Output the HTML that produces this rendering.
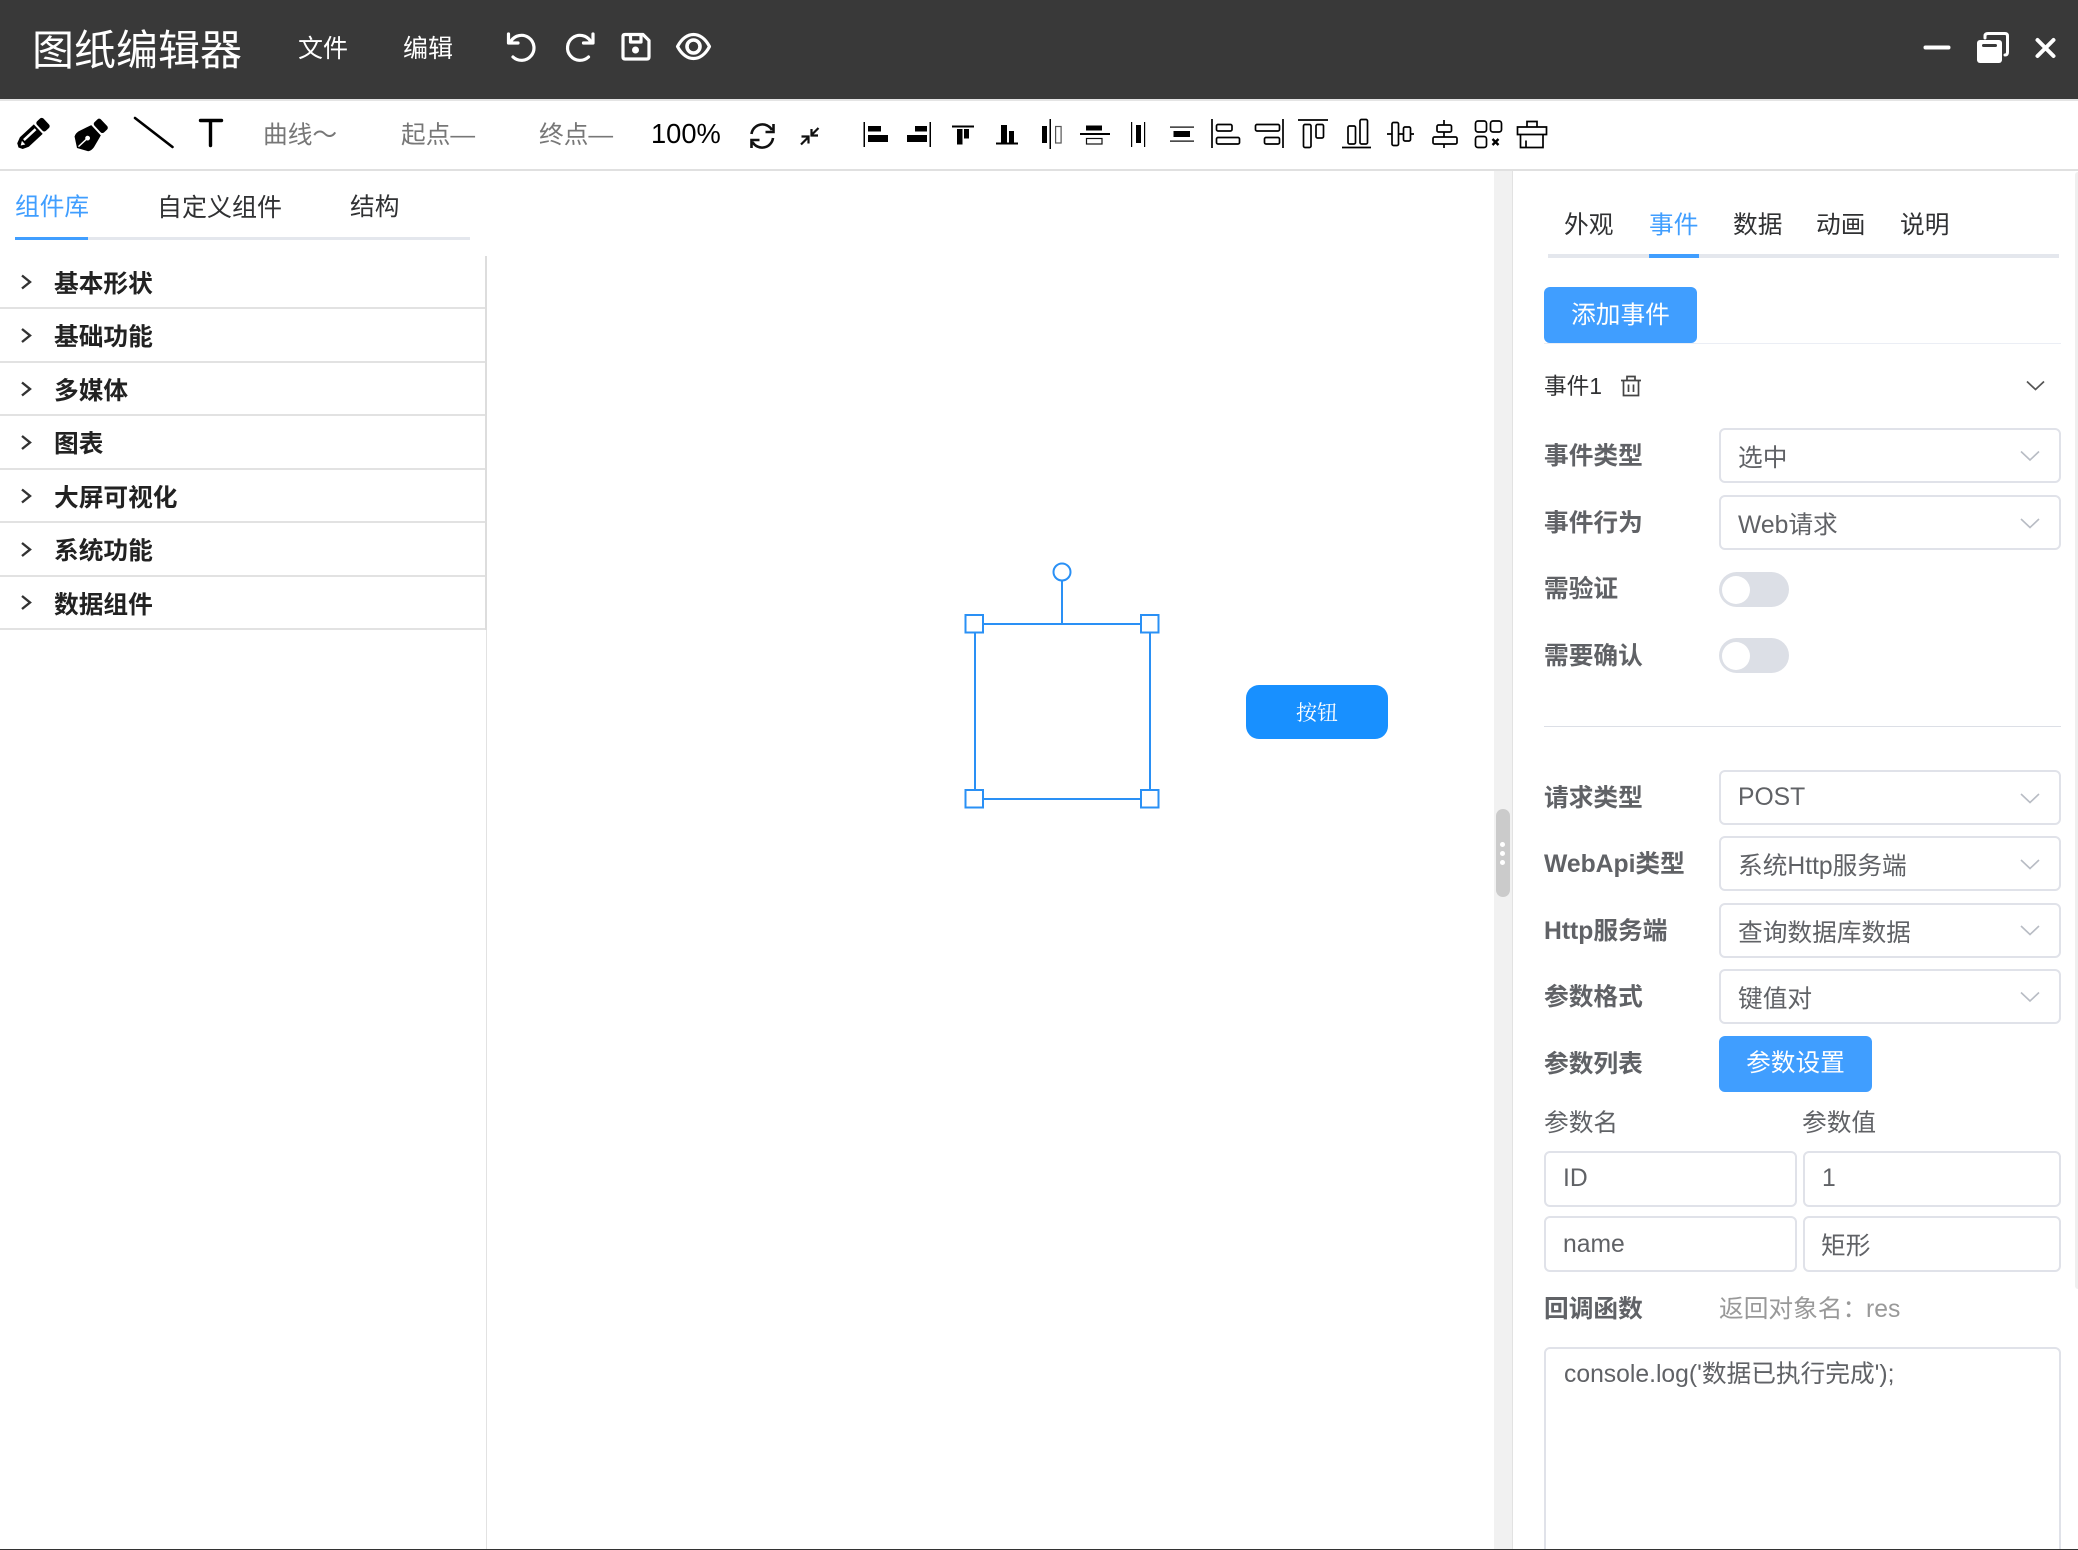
<!DOCTYPE html>
<html lang="zh-CN">
<head>
<meta charset="utf-8">
<title>图纸编辑器</title>
<style>
html,body{margin:0;padding:0;background:#fff;}
#p{position:relative;width:2078px;height:1550px;overflow:hidden;background:#fff;font-family:"Liberation Sans","Noto Sans CJK SC",sans-serif;font-size:24.7px;color:#606266;}
#p div{position:absolute;box-sizing:border-box;}
.t{white-space:nowrap;line-height:30px;height:30px;}
.b{font-weight:700;}
.acc{left:54px;font-weight:700;color:#222;}
.line{left:0;width:485px;height:2px;background:#e2e2e2;}
.sel,.inp{border:2px solid #e0e2e9;border-radius:6px;background:#fff;}
.sw{left:1719px;width:70px;height:35px;border-radius:18px;background:#dcdfe6;}
.sw i{position:absolute;left:3px;top:3.5px;width:28px;height:28px;border-radius:50%;background:#fff;}
.btn{background:#409eff;border-radius:6px;color:#fff;text-align:center;}
svg{position:absolute;left:0;top:0;}
</style>
</head>
<body>
<div id="p">
<div style="left:0;top:0;width:2078px;height:99px;background:#393939;"></div>
<div style="left:0;top:99px;width:2078px;height:2px;background:#e4e4e4;"></div>
<div style="left:0;top:169px;width:2078px;height:2px;background:#e0e0e0;"></div>

<div class="t" style="left:32px;top:26px;font-size:42px;line-height:50px;height:50px;color:#fff;">图纸编辑器</div>
<div class="t" style="left:298px;top:34px;color:#fff;font-size:25px;">文件</div>
<div class="t" style="left:403px;top:34px;color:#fff;font-size:25px;">编辑</div>

<div class="t" style="left:263px;top:121px;color:#777;">曲线～</div>
<div class="t" style="left:401px;top:121px;color:#777;">起点—</div>
<div class="t" style="left:539px;top:121px;color:#777;">终点—</div>
<div class="t" style="left:651px;top:119px;color:#000;font-size:27.3px;">100%</div>

<!-- left tabs -->
<div class="t" style="left:15px;top:193px;color:#409eff;">组件库</div>
<div class="t" style="left:157px;top:193px;color:#303133;font-size:25px;">自定义组件</div>
<div class="t" style="left:350px;top:193px;color:#303133;">结构</div>
<div style="left:15px;top:237px;width:455px;height:3px;background:#e4e7ed;"></div>
<div style="left:15px;top:237px;width:73px;height:3px;background:#409eff;"></div>

<div style="left:485px;top:256px;width:2px;height:374px;background:#ddd;"></div>
<div style="left:486px;top:630px;width:1px;height:920px;background:#e2e2e2;"></div>
<div class="t acc" style="top:270px;">基本形状</div><div class="line" style="top:307px;"></div>
<div class="t acc" style="top:323px;">基础功能</div><div class="line" style="top:361px;"></div>
<div class="t acc" style="top:377px;">多媒体</div><div class="line" style="top:414px;"></div>
<div class="t acc" style="top:430px;">图表</div><div class="line" style="top:468px;"></div>
<div class="t acc" style="top:484px;">大屏可视化</div><div class="line" style="top:521px;"></div>
<div class="t acc" style="top:537px;">系统功能</div><div class="line" style="top:575px;"></div>
<div class="t acc" style="top:591px;">数据组件</div><div class="line" style="top:628px;"></div>

<!-- splitter -->
<div style="left:1494px;top:171px;width:18px;height:1379px;background:#f1f1f1;"></div>
<div style="left:1512px;top:171px;width:1px;height:1379px;background:#e2e2e2;"></div>
<div style="left:1496px;top:809px;width:14px;height:88px;border-radius:7px;background:#cbcbcb;"></div>
<div style="left:1500px;top:842px;width:5px;height:5px;border-radius:50%;background:#fff;"></div>
<div style="left:1500px;top:851px;width:5px;height:5px;border-radius:50%;background:#fff;"></div>
<div style="left:1500px;top:860px;width:5px;height:5px;border-radius:50%;background:#fff;"></div>
<div style="left:2075px;top:172px;width:3px;height:1117px;border-radius:3px 0 0 3px;background:#efefef;"></div>

<!-- right tabs -->
<div class="t" style="left:1564px;top:211px;color:#303133;">外观</div>
<div class="t" style="left:1649px;top:211px;color:#409eff;">事件</div>
<div class="t" style="left:1733px;top:211px;color:#303133;">数据</div>
<div class="t" style="left:1816px;top:211px;color:#303133;">动画</div>
<div class="t" style="left:1900px;top:211px;color:#303133;">说明</div>
<div style="left:1548px;top:254px;width:511px;height:4px;background:#e4e7ed;"></div>
<div style="left:1649px;top:254px;width:50px;height:4px;background:#409eff;"></div>

<div class="btn" style="left:1544px;top:287px;width:153px;height:56px;line-height:57px;">添加事件</div>
<div style="left:1544px;top:343px;width:517px;height:1px;background:#ebeef5;"></div>
<div class="t" style="left:1544px;top:371px;color:#303133;font-size:22.7px;">事件1</div>

<div class="t b" style="left:1544px;top:442px;">事件类型</div>
<div class="sel" style="left:1719px;top:428px;width:342px;height:55px;"></div>
<div class="t" style="left:1738px;top:444px;">选中</div>
<div class="t b" style="left:1544px;top:509px;">事件行为</div>
<div class="sel" style="left:1719px;top:495px;width:342px;height:55px;"></div>
<div class="t" style="left:1738px;top:511px;">Web请求</div>
<div class="t b" style="left:1544px;top:575px;">需验证</div>
<div class="sw" style="top:572px;"><i></i></div>
<div class="t b" style="left:1544px;top:642px;">需要确认</div>
<div class="sw" style="top:638px;"><i></i></div>
<div style="left:1544px;top:726px;width:517px;height:1px;background:#dcdfe6;"></div>

<div class="t b" style="left:1544px;top:784px;">请求类型</div>
<div class="sel" style="left:1719px;top:770px;width:342px;height:55px;"></div>
<div class="t" style="left:1738px;top:783px;">POST</div>
<div class="t b" style="left:1544px;top:850px;">WebApi类型</div>
<div class="sel" style="left:1719px;top:836px;width:342px;height:55px;"></div>
<div class="t" style="left:1738px;top:852px;">系统Http服务端</div>
<div class="t b" style="left:1544px;top:917px;">Http服务端</div>
<div class="sel" style="left:1719px;top:903px;width:342px;height:55px;"></div>
<div class="t" style="left:1738px;top:919px;">查询数据库数据</div>
<div class="t b" style="left:1544px;top:983px;">参数格式</div>
<div class="sel" style="left:1719px;top:969px;width:342px;height:55px;"></div>
<div class="t" style="left:1738px;top:985px;">键值对</div>
<div class="t b" style="left:1544px;top:1050px;">参数列表</div>
<div class="btn" style="left:1719px;top:1036px;width:153px;height:56px;line-height:56px;">参数设置</div>

<div class="t" style="left:1544px;top:1109px;">参数名</div>
<div class="t" style="left:1802px;top:1109px;">参数值</div>
<div class="inp" style="left:1544px;top:1151px;width:253px;height:56px;"></div>
<div class="t" style="left:1563px;top:1164px;">ID</div>
<div class="inp" style="left:1803px;top:1151px;width:258px;height:56px;"></div>
<div class="t" style="left:1822px;top:1164px;">1</div>
<div class="inp" style="left:1544px;top:1216px;width:253px;height:56px;"></div>
<div class="t" style="left:1563px;top:1230px;">name</div>
<div class="inp" style="left:1803px;top:1216px;width:258px;height:56px;"></div>
<div class="t" style="left:1821px;top:1232px;">矩形</div>
<div class="t b" style="left:1544px;top:1295px;">回调函数</div>
<div class="t" style="left:1719px;top:1295px;color:#999;">返回对象名：</div>
<div class="t" style="left:1866px;top:1295px;color:#999;">res</div>
<div class="inp" style="left:1544px;top:1347px;width:517px;height:230px;"></div>
<div class="t" style="left:1564px;top:1360px;">console.log('数据已执行完成');</div>

<div style="left:0;top:1549px;width:2078px;height:1px;background:#333;"></div>

<!-- canvas button -->
<div style="left:1246px;top:685px;width:142px;height:54px;border-radius:13px;background:#1890ff;color:#fff;text-align:center;line-height:54px;font-size:21px;font-family:'Noto Serif CJK SC',serif;">按钮</div>

<svg width="2078" height="1550" viewBox="0 0 2078 1550" fill="none">
<!-- header icons -->
<g stroke="#fff" stroke-width="3.2" stroke-linecap="round" stroke-linejoin="round">
<path d="M508.5 34V43H518M511 41A12.5 12.5 0 1 1 513 57"/>
<path d="M593 34V43H583.500M590.500 41A12.5 12.5 0 1 0 588.500 57"/>
<path d="M625 34.500H643L649 40.500V57Q649 59 647 59H625Q623 59 623 57V36.500Q623 34.500 625 34.500Z"/>
<path d="M630.500 35V42H641V35"/>
<path d="M677.500 46.500C682 38 688 34.500 693.500 34.500C699 34.500 705 38 709.500 46.500C705 55 699 58.500 693.500 58.500C688 58.500 682 55 677.500 46.500Z"/>
<circle cx="693.500" cy="46.500" r="6.500" stroke-width="3.600"/>
<path d="M1925.500 47.500H1948.500" stroke-width="4"/>
<path d="M1985 38V36Q1985 33.500 1988 33.500H2005Q2007.500 33.500 2007.500 36V52Q2007.500 55 2005 55" stroke-width="3"/>
<path d="M2037.500 40L2053.500 56M2053.500 40L2037.500 56" stroke-width="4"/>
</g>
<circle cx="635.500" cy="50" r="3.500" fill="#fff"/>
<rect x="1977" y="40" width="25" height="23" rx="3" fill="#fff"/>
<rect x="1982" y="44" width="15" height="3" rx="1.500" fill="#393939"/>

<!-- pencil -->
<g transform="translate(18.500 147.500) rotate(-43)">
<path d="M0 0L2 -4L8 -6.500H27V6.500H8L2 4Z" fill="#000"/>
<rect x="29" y="-6.500" width="9" height="13" rx="2.500" fill="#000"/>
<path d="M9 -3H25V-0.500H9Z" fill="#fff"/>
<path d="M3 0L7 -2.500V2.500Z" fill="#fff"/>
</g>
<!-- pen nib -->
<g transform="translate(77 148) rotate(-43)">
<path d="M0 0L6 -10Q9 -12 13 -11L23 -8L26 -7V7L23 8L13 11Q9 12 6 10Z" fill="#000"/>
<rect x="28" y="-7" width="9" height="14" rx="2.500" fill="#000"/>
<path d="M2 0H14" stroke="#fff" stroke-width="1.500"/>
<circle cx="14.500" cy="0" r="2.400" fill="#fff"/>
</g>
<path d="M135 118L172.500 147" stroke="#000" stroke-width="2.600" stroke-linecap="round"/>
<path d="M200.500 120.500H221.500M210.500 120.500V145.500" stroke="#000" stroke-width="3.400" stroke-linecap="round"/>

<!-- sync, compress -->
<g stroke="#111" stroke-width="2.600">
<path d="M751.500 134A11 11 0 0 1 772 130M773.500 124V132H765.500"/>
<path d="M773 138A11 11 0 0 1 752.500 142M751.500 148V140H759.500"/>
<path d="M818.500 128L811 135.500M811.500 129V135.500H818" stroke-width="2.200"/>
<path d="M801 144.500L808.500 137M801.500 136.500H808.500V143.500" stroke-width="2.200"/>
</g>

<!-- alignment solid icons -->
<g fill="#000">
<rect x="863.500" y="122" width="1.500" height="25"/><rect x="868" y="126" width="13" height="5.500"/><rect x="868" y="135" width="20" height="7"/>
<rect x="929.500" y="122" width="1.500" height="25"/><rect x="915" y="126" width="12" height="5.500"/><rect x="907" y="135" width="20" height="7"/>
<rect x="952" y="125.500" width="22" height="2"/><rect x="957" y="129" width="5.500" height="15.500"/><rect x="964" y="129" width="5" height="9.500"/>
<rect x="996" y="142.500" width="22" height="2"/><rect x="1001" y="125" width="6" height="17.500"/><rect x="1009" y="131" width="5" height="11.500"/>
<rect x="1049.500" y="119" width="1.500" height="30"/><rect x="1042" y="126" width="5" height="17"/>
<rect x="1080" y="133" width="30" height="2"/><rect x="1086" y="125.500" width="16" height="5"/>
<rect x="1131" y="122" width="1.200" height="25"/><rect x="1144" y="122" width="1.200" height="25"/><rect x="1136" y="125" width="5" height="18"/>
<rect x="1170" y="126.500" width="24" height="1.200"/><rect x="1170" y="140.500" width="24" height="1.200"/><rect x="1173.500" y="131" width="16.500" height="6"/>
</g>
<g stroke="#333" stroke-width="1.200">
<rect x="1055.600" y="126.500" width="5.500" height="16.500" stroke="#555"/>
<rect x="1086.500" y="138.500" width="15.500" height="5.500" stroke="#111"/>
</g>

<!-- alignment outline icons -->
<g stroke="#000" stroke-width="1.700">
<path d="M1212 119V148M1283 119V148M1298 120H1328M1342 147.500H1371M1387 134H1392M1398 134H1403M1411 134H1414M1444 120V125M1444 132V137M1444 144V148" />
<rect x="1216.500" y="124.500" width="15.500" height="6.500" rx="1.500"/>
<rect x="1216.500" y="137.500" width="23" height="6.500" rx="1.500"/>
<rect x="1255.500" y="124.500" width="24" height="6.500" rx="1.500"/>
<rect x="1264.500" y="137.500" width="15" height="6.500" rx="1.500"/>
<rect x="1303.500" y="124.500" width="7.500" height="23" rx="1.500"/>
<rect x="1316" y="124.500" width="7.500" height="13.500" rx="1.500"/>
<rect x="1348" y="126" width="7.500" height="18" rx="1.500"/>
<rect x="1360" y="119.500" width="7.500" height="24.500" rx="1.500"/>
<rect x="1392" y="122.500" width="6.500" height="23" rx="1.500"/>
<rect x="1403.500" y="127" width="7" height="14" rx="1.500"/>
<rect x="1437" y="125" width="14.500" height="7" rx="1.500"/>
<rect x="1433" y="137" width="24" height="7" rx="1.500"/>
<rect x="1475.500" y="121" width="11" height="11" rx="2.500"/>
<rect x="1490.500" y="121" width="11" height="11" rx="2.500"/>
<rect x="1475.500" y="136.500" width="11" height="11" rx="2.500"/>
<path d="M1492.500 139L1498.500 145M1498.500 139L1492.500 145" stroke-width="2.400"/>
<path d="M1527 127V121.500H1537V127M1517.500 127H1546.500V134.500H1517.500ZM1520.500 134.500V147.500H1543V134.500M1526 147.500V140.500" />
</g>

<!-- accordion chevrons -->
<g stroke="#333" stroke-width="2.400">
<path d="M22 275.500L30 282L22 288.500"/>
<path d="M22 329L30 335.500L22 342"/>
<path d="M22 382.500L30 389L22 395.500"/>
<path d="M22 436L30 442.500L22 449"/>
<path d="M22 489.500L30 496L22 502.500"/>
<path d="M22 543L30 549.500L22 556"/>
<path d="M22 596L30 602.500L22 609"/>
</g>

<!-- selection box -->
<g stroke="#2a90f5" stroke-width="2" fill="#fff">
<path d="M1062 581V624M975 624H1150V799H975Z" fill="none"/>
<circle cx="1062" cy="572" r="8.500"/>
<rect x="965.500" y="615" width="17.500" height="17.500"/>
<rect x="1141" y="615" width="17.500" height="17.500"/>
<rect x="965.500" y="790" width="17.500" height="17.500"/>
<rect x="1141" y="790" width="17.500" height="17.500"/>
</g>

<!-- trash + event chevron -->
<g stroke="#444" stroke-width="1.700">
<path d="M1621 380.500H1641M1627 380V376.500H1635V380M1623.500 380.500V395.500H1638.500V380.500M1628.500 384.500V392M1633.500 384.500V392"/>
<path d="M2027 381.500L2035.500 389.500L2044 381.500" stroke="#555"/>
</g>
<!-- select chevrons -->
<g stroke="#b8bcc4" stroke-width="1.600">
<path d="M2021 451.500L2030 460L2039 451.500"/>
<path d="M2021 519L2030 527.500L2039 519"/>
<path d="M2021 794L2030 802.500L2039 794"/>
<path d="M2021 860L2030 868.500L2039 860"/>
<path d="M2021 926L2030 934.500L2039 926"/>
<path d="M2021 992.500L2030 1001L2039 992.500"/>
</g>
</svg>
</div>
</body>
</html>
